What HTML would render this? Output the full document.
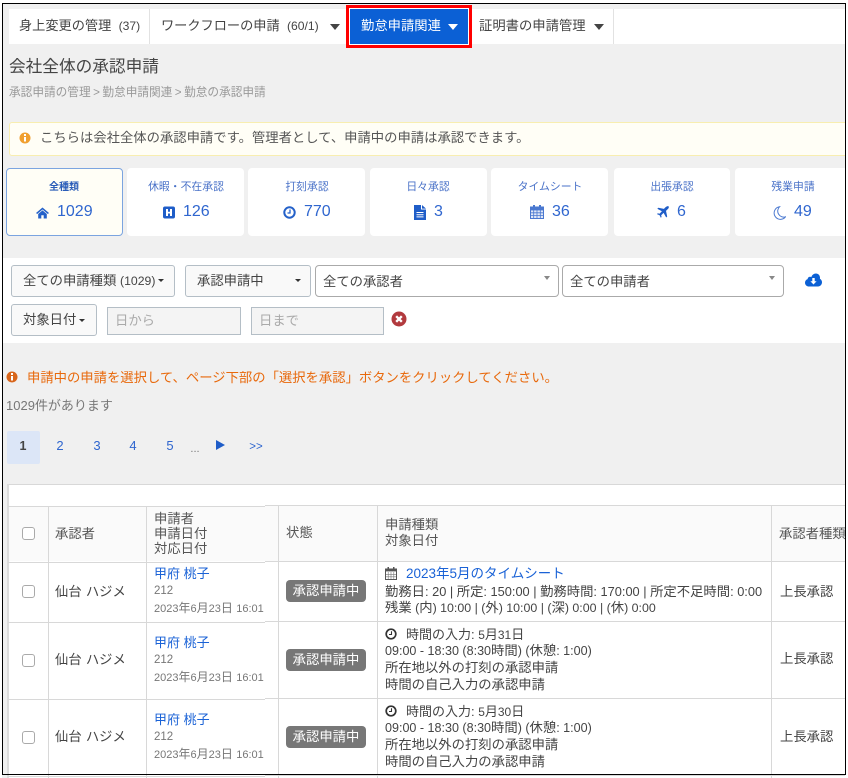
<!DOCTYPE html>
<html lang="ja"><head><meta charset="utf-8"><title>会社全体の承認申請</title>
<style>
html,body{margin:0;padding:0;background:#fff}
#p{position:relative;width:848px;height:778px;overflow:hidden;background:#fff;font-family:"Liberation Sans","Noto Sans CJK JP",sans-serif;color:#444;font-size:13.33px;text-spacing-trim:space-all}
#c{position:absolute;left:0;top:0;width:845px;height:778px;overflow:hidden}
.a{position:absolute}
.t{position:absolute;white-space:nowrap;line-height:16px}
.ct{transform:translateX(-50%)}
i.n{font-style:normal;font-size:.92em}
i.l{font-style:normal;font-size:var(--l)}
.card{position:absolute;top:168px;height:68px;background:#fff;border-radius:4px}
.lb{color:#4a72c8;font-size:10.83px}
.num{color:#2f66cf;font-size:16px}
.btn{position:absolute;background:#f9f9f9;border:1px solid #b4bec6;border-radius:3px;box-sizing:border-box}
.sel{position:absolute;background:#fff;border:1px solid #aaa;border-radius:4px;box-sizing:border-box;top:265px;height:32px}
.inp{position:absolute;background:#f4f4f4;border:1px solid #b4bec6;box-sizing:border-box;top:307px;height:28px}
.h{position:absolute;background:#d8d8d8}
.cb{position:absolute;left:22px;width:11px;height:11px;border:1.5px solid #aaa;border-radius:3px;background:#fff}
.bd{position:absolute;left:286px;width:80px;height:22px;background:#777;border-radius:4px;color:#fff;font-size:13.33px;line-height:22px;text-align:center}
.lk{color:#1a62d6}
.g{color:#777}
.pg{color:#2f66cf;font-size:13px}
.nm{word-spacing:.5px}
.d{font-size:12px}
.d i{font-style:normal;font-size:11px}
</style></head><body>
<div id="p"><div id="c">
<div class="a" style="left:0;top:0;width:848px;height:778px;background:#f0f0f0"></div>

<!-- nav -->
<div class="a" style="left:9px;top:9px;width:836px;height:35px;background:#fff"></div>
<div class="h" style="left:149px;top:9px;width:1px;height:35px;background:#e2e2e2"></div>
<div class="h" style="left:613px;top:9px;width:1px;height:35px;background:#e2e2e2"></div>
<span class="t" style="left:19px;top:18px;color:#444;font-size:13.2px">身上変更の管理&nbsp; <i class="n">(37)</i></span>
<span class="t" style="left:161px;top:18px;color:#444;font-size:13.2px">ワークフローの申請&nbsp; <i class="n">(60/1)</i></span>
<div class="a" style="left:330px;top:24px;border:5px solid transparent;border-top:6px solid #444;border-bottom:0"></div>
<div class="a" style="left:346px;top:5px;width:126px;height:43px;background:#fff;box-sizing:border-box;border:3px solid #f00"></div>
<div class="a" style="left:350px;top:9px;width:118px;height:35px;background:#0b60d5"></div>
<span class="t" style="left:361px;top:18px;color:#fff">勤怠申請関連</span>
<div class="a" style="left:448px;top:24px;border:5px solid transparent;border-top:6px solid #fff;border-bottom:0"></div>
<span class="t" style="left:479px;top:18px;color:#444">証明書の申請管理</span>
<div class="a" style="left:594px;top:24px;border:5px solid transparent;border-top:6px solid #444;border-bottom:0"></div>

<!-- title -->
<span class="t" style="left:9px;top:59px;font-size:16.67px;color:#444">会社全体の承認申請</span>
<span class="t" style="left:9px;top:85px;font-size:11.67px;color:#999;word-spacing:-.75px">承認申請の管理 &gt; 勤怠申請関連 &gt; 勤怠の承認申請</span>

<!-- alert -->
<div class="a" style="left:9px;top:122px;width:840px;height:34px;box-sizing:border-box;background:#fffef6;border:1px solid #f8eeb0;border-radius:3px"></div>
<svg class="a" style="left:19px;top:132px" width="12" height="12" viewBox="0 0 12 12"><circle cx="6" cy="6" r="5.5" fill="#f0a030"/><rect x="5" y="2" width="2" height="2" fill="#fff"/><rect x="5" y="5" width="2" height="4.5" fill="#fff"/></svg>
<span class="t" style="left:40px;top:130px;color:#555">こちらは会社全体の承認申請です。管理者として、申請中の申請は承認できます。</span>

<!-- cards -->
<div class="card" style="left:6px;width:117px;box-sizing:border-box;background:#fffef6;border:1px solid #7ba4e0"></div>
<div class="card" style="left:127px;width:117px"></div>
<div class="card" style="left:248px;width:117px"></div>
<div class="card" style="left:370px;width:117px"></div>
<div class="card" style="left:491px;width:117px"></div>
<div class="card" style="left:614px;width:116px"></div>
<div class="card" style="left:735px;width:120px"></div>

<span class="t ct lb" style="left:64px;top:180px;color:#2a5cb8;font-weight:bold;font-size:10px">全種類</span>
<span class="t ct lb" style="left:186px;top:179px">休暇・不在承認</span>
<span class="t ct lb" style="left:307px;top:179px">打刻承認</span>
<span class="t ct lb" style="left:428px;top:179px">日々承認</span>
<span class="t ct lb" style="left:550px;top:179px">タイムシート</span>
<span class="t ct lb" style="left:672px;top:179px">出張承認</span>
<span class="t ct lb" style="left:793px;top:179px">残業申請</span>

<svg class="a" style="left:36px;top:207px" width="13" height="12" viewBox="0 0 13 12"><path d="M6.500 .5 L13 6 L11.800 7 L6.500 2.500 L1.200 7 L0 6 Z M2.200 7 L6.500 3.400 L10.800 7 V11.500 H7.700 V8.200 H5.300 V11.500 H2.200 Z" fill="#2461c9"/></svg>
<span class="t num" style="left:57px;top:204px">1029</span>
<svg class="a" style="left:163px;top:206px" width="12" height="13" viewBox="0 0 12 12"><rect width="12" height="12" rx="2" fill="#1f5dc8"/><path d="M3 2.500h2v2.700h2V2.500h2v7H7V7H5v2.500H3z" fill="#fff"/></svg>
<span class="t num" style="left:183px;top:204px">126</span>
<svg class="a" style="left:283px;top:206px" width="13" height="13" viewBox="0 0 13 13"><circle cx="6.500" cy="6.500" r="5.200" fill="none" stroke="#2461c9" stroke-width="2"/><path d="M7 3.500V7H4.500" fill="none" stroke="#2461c9" stroke-width="1.300"/></svg>
<span class="t num" style="left:304px;top:204px">770</span>
<svg class="a" style="left:414px;top:205px" width="12" height="15" viewBox="0 0 12 15"><path d="M0 0H7V4.500H12V15H0Z M8 0L12 3.600H8Z" fill="#1f5dc8"/><path d="M2.500 7.500H9.500M2.500 9.700H9.500M2.500 11.900H9.500" stroke="#fff" stroke-width="1"/></svg>
<span class="t num" style="left:434px;top:204px">3</span>
<svg class="a" style="left:530px;top:205px" width="14" height="14" viewBox="0 0 14 14"><rect x=".5" y="2" width="13" height="11.500" fill="#dfe7f7" stroke="#4a78d0"/><rect x="0" y="2" width="14" height="3.400" fill="#4a78d0"/><rect x="3" y="0" width="2" height="3.500" fill="#4a78d0"/><rect x="9" y="0" width="2" height="3.500" fill="#4a78d0"/><path d="M3.700 5v8M7 5v8M10.300 5v8M1 7.800h12M1 10.600h12" stroke="#4a78d0" stroke-width=".8"/></svg>
<span class="t num" style="left:552px;top:204px">36</span>
<svg class="a" style="left:657px;top:206px" width="12" height="12" viewBox="0 0 12 12"><path d="M11.600 .4c.7.700-.1 2-1 2.900L9 4.900l1.200 5.600-1 1-2.600-4.600L4.200 9.300l.4 1.700-.8.8-1.200-2.500L0 8.100l.8-.8 1.700.4 2.400-2.400L.3 2.700l1-1 5.600 1.200L8.500 1.300c.9-.9 2.400-1.600 3.100-.9z" fill="#1f5dc8"/></svg>
<span class="t num" style="left:677px;top:204px">6</span>
<svg class="a" style="left:773px;top:206px" width="13" height="14" viewBox="0 0 13 14"><path d="M6.500 .8A6.300 6.300 0 1 0 12.500 10.800A6 6 0 0 1 6.500 .8Z" fill="none" stroke="#4a78d0" stroke-width="1"/></svg>
<span class="t num" style="left:794px;top:204px">49</span>

<!-- filter panel -->
<div class="a" style="left:3px;top:258px;width:845px;height:85px;background:#fff"></div>
<div class="btn" style="left:11px;top:265px;width:164px;height:32px"></div>
<span class="t" style="left:23px;top:273px;color:#444">全ての申請種類 <i class="n">(1029)</i></span>
<div class="a" style="left:158px;top:279px;border:3px solid transparent;border-top:3px solid #333;border-bottom:0"></div>
<div class="btn" style="left:185px;top:265px;width:126px;height:32px"></div>
<span class="t" style="left:197px;top:273px;color:#444">承認申請中</span>
<div class="a" style="left:295px;top:279px;border:3px solid transparent;border-top:3px solid #333;border-bottom:0"></div>
<div class="sel" style="left:315px;width:244px"></div>
<span class="t" style="left:323px;top:274px;color:#444">全ての承認者</span>
<div class="a" style="left:544px;top:276px;border:3px solid transparent;border-top:4px solid #888;border-bottom:0"></div>
<div class="sel" style="left:562px;width:222px"></div>
<span class="t" style="left:570px;top:274px;color:#444">全ての申請者</span>
<div class="a" style="left:769px;top:276px;border:3px solid transparent;border-top:4px solid #888;border-bottom:0"></div>
<svg class="a" style="left:805px;top:273px" width="17" height="14" viewBox="0 0 17 14"><path d="M4 13.500C1.800 13.500 0 11.800 0 9.700C0 8 1 6.600 2.600 6.100C2.700 4.800 3.800 3.800 5.100 3.800C5.600 3.800 6 3.900 6.300 4.100C7 2 8.800 .5 10.900 .5C13.400 .5 15 2.400 15 4.800C15 5.200 15 5.500 14.900 5.800C16.200 6.500 17 7.800 17 9.300C17 11.600 15.200 13.500 13 13.500Z" fill="#0b60d5"/><path d="M7.300 5H9.700V8.200H11.600L8.500 11.500L5.400 8.200H7.300Z" fill="#fff"/></svg>

<div class="btn" style="left:11px;top:304px;width:86px;height:32px"></div>
<span class="t" style="left:23px;top:312px;color:#444">対象日付</span>
<div class="a" style="left:79px;top:319px;border:3px solid transparent;border-top:3px solid #333;border-bottom:0"></div>
<div class="inp" style="left:107px;width:134px"></div>
<span class="t" style="left:115px;top:313px;color:#aaa">日から</span>
<div class="inp" style="left:251px;width:133px"></div>
<span class="t" style="left:259px;top:313px;color:#aaa">日まで</span>
<svg class="a" style="left:391px;top:311px" width="16" height="16" viewBox="0 0 16 16"><circle cx="8" cy="8" r="7.500" fill="#b23a3e"/><path d="M5.200 5.200L10.800 10.800M10.800 5.200L5.200 10.800" stroke="#fff" stroke-width="2.400"/></svg>

<!-- messages -->
<svg class="a" style="left:6px;top:371px" width="12" height="12" viewBox="0 0 12 12"><circle cx="6" cy="6" r="5.500" fill="#d8651a"/><rect x="5" y="2" width="2" height="2" fill="#fff"/><rect x="5" y="5" width="2" height="4.500" fill="#fff"/></svg>
<span class="t" style="left:27px;top:370px;color:#e8690c">申請中の申請を選択して、ページ下部の「選択を承認」ボタンをクリックしてください。</span>
<span class="t" style="left:6px;top:398px;font-size:13px;color:#777">1029件があります</span>

<!-- pagination -->
<div class="a" style="left:7px;top:431px;width:33px;height:33px;background:#dce6f7;border-radius:2px"></div>
<span class="t ct" style="left:23px;top:438px;font-weight:bold;color:#444;font-size:12.500px">1</span>
<span class="t ct pg" style="left:60px;top:438px">2</span>
<span class="t ct pg" style="left:97px;top:438px">3</span>
<span class="t ct pg" style="left:133px;top:438px">4</span>
<span class="t ct pg" style="left:170px;top:438px">5</span>
<span class="t ct" style="left:195px;top:441px;font-size:11px;color:#777">...</span>
<div class="a" style="left:216px;top:440px;border:5px solid transparent;border-left:9px solid #1f5dc8;border-right:0"></div>
<span class="t ct" style="left:256px;top:439px;font-size:11.5px;color:#2f66cf">&gt;&gt;</span>

<!-- table -->
<div class="a" style="left:7px;top:484px;width:845px;height:300px;background:#fff"></div>
<div class="a" style="left:8px;top:506px;width:840px;height:55px;background:#fafafa"></div>
<div class="a" style="left:265px;top:505px;width:583px;height:1px;background:#fff"></div>
<div class="h" style="left:7px;top:484px;width:845px;height:1px"></div>
<div class="h" style="left:7px;top:484px;width:2px;height:300px;background:#dcdcdc"></div>
<div class="h" style="left:8px;top:506px;width:257px;height:1px"></div><div class="h" style="left:265px;top:505px;width:583px;height:1px"></div>
<div class="h" style="left:8px;top:562px;width:257px;height:1px"></div><div class="h" style="left:265px;top:561px;width:583px;height:1px"></div>
<div class="h" style="left:8px;top:622px;width:257px;height:1px"></div><div class="h" style="left:265px;top:621px;width:583px;height:1px"></div>
<div class="h" style="left:8px;top:699px;width:257px;height:1px"></div><div class="h" style="left:265px;top:698px;width:583px;height:1px"></div>
<div class="h" style="left:8px;top:776px;width:257px;height:1px"></div><div class="h" style="left:265px;top:775px;width:583px;height:1px"></div>
<div class="h" style="left:48px;top:506px;width:1px;height:272px"></div>
<div class="h" style="left:146px;top:506px;width:1px;height:272px"></div>
<div class="h" style="left:278px;top:505px;width:1px;height:273px"></div>
<div class="h" style="left:377px;top:505px;width:1px;height:273px"></div>
<div class="h" style="left:771px;top:505px;width:1px;height:273px"></div>

<!-- header -->
<div class="cb" style="top:527px"></div>
<span class="t" style="left:55px;top:526px;color:#555">承認者</span>
<span class="t" style="left:154px;top:511px;color:#555">申請者</span>
<span class="t" style="left:154px;top:526px;color:#555">申請日付</span>
<span class="t" style="left:154px;top:541px;color:#555">対応日付</span>
<span class="t" style="left:286px;top:525px;color:#555">状態</span>
<span class="t" style="left:385px;top:517px;color:#555">申請種類</span>
<span class="t" style="left:385px;top:533px;color:#555">対象日付</span>
<span class="t" style="left:779px;top:526px;color:#555">承認者種類</span>

<!-- row 1 -->
<div class="cb" style="top:585px"></div>
<span class="t nm" style="left:55px;top:584px">仙台 ハジメ</span>
<span class="t lk" style="left:154px;top:566px;font-size:13px">甲府 桃子</span>
<span class="t g" style="left:154px;top:583px;font-size:11.500px">212</span>
<span class="t g d" style="left:154px;top:600px"><i>2023</i>年<i>6</i>月<i>23</i>日 <i>16:01</i></span>
<div class="bd" style="top:580px">承認申請中</div>
<svg class="a" style="left:385px;top:567px" width="12" height="13" viewBox="0 0 12 13"><rect x=".5" y="2" width="11" height="10.500" fill="#fff" stroke="#555"/><rect x="0" y="2" width="12" height="2.400" fill="#555"/><rect x="2.500" y="0" width="1.500" height="3" fill="#555"/><rect x="8" y="0" width="1.500" height="3" fill="#555"/><path d="M3.200 5v7M6 5v7M8.800 5v7M1 7.300h10M1 9.800h10" stroke="#777" stroke-width=".6"/></svg>
<span class="t lk" style="left:406px;top:566px;font-size:13.5px">2023年5月のタイムシート</span>
<span class="t" style="left:385px;top:584px;--l:12.8px">勤務日<i class="l">: 20 | </i>所定<i class="l">: 150:00 | </i>勤務時間<i class="l">: 170:00 | </i>所定不足時間<i class="l">: 0:00</i></span>
<span class="t" style="left:385px;top:600px;--l:12.4px">残業<i class="l"> (</i>内<i class="l">) 10:00 | (</i>外<i class="l">) 10:00 | (</i>深<i class="l">) 0:00 | (</i>休<i class="l">) 0:00</i></span>
<span class="t" style="left:780px;top:584px">上長承認</span>

<!-- row 2 -->
<div class="cb" style="top:654px"></div>
<span class="t nm" style="left:55px;top:652px">仙台 ハジメ</span>
<span class="t lk" style="left:154px;top:635px;font-size:13px">甲府 桃子</span>
<span class="t g" style="left:154px;top:652px;font-size:11.500px">212</span>
<span class="t g d" style="left:154px;top:669px"><i>2023</i>年<i>6</i>月<i>23</i>日 <i>16:01</i></span>
<div class="bd" style="top:649px">承認申請中</div>
<svg class="a" style="left:385px;top:628px" width="12" height="12" viewBox="0 0 12 12"><circle cx="6" cy="6" r="4.800" fill="none" stroke="#333" stroke-width="1.700"/><path d="M6.500 3.200V6.500H4" fill="none" stroke="#333" stroke-width="1.100"/></svg>
<span class="t" style="left:406px;top:627px;font-size:13px">時間の入力: <i class="n">5</i>月<i class="n">31</i>日</span>
<span class="t" style="left:385px;top:643px;--l:12.55px"><i class="l">09:00 - 18:30 (8:30</i>時間<i class="l">) (</i>休憩<i class="l">: 1:00)</i></span>
<span class="t" style="left:385px;top:660px">所在地以外の打刻の承認申請</span>
<span class="t" style="left:385px;top:677px">時間の自己入力の承認申請</span>
<span class="t" style="left:780px;top:651px">上長承認</span>

<!-- row 3 -->
<div class="cb" style="top:731px"></div>
<span class="t nm" style="left:55px;top:729px">仙台 ハジメ</span>
<span class="t lk" style="left:154px;top:712px;font-size:13px">甲府 桃子</span>
<span class="t g" style="left:154px;top:729px;font-size:11.500px">212</span>
<span class="t g d" style="left:154px;top:746px"><i>2023</i>年<i>6</i>月<i>23</i>日 <i>16:01</i></span>
<div class="bd" style="top:726px">承認申請中</div>
<svg class="a" style="left:385px;top:705px" width="12" height="12" viewBox="0 0 12 12"><circle cx="6" cy="6" r="4.800" fill="none" stroke="#333" stroke-width="1.700"/><path d="M6.500 3.200V6.500H4" fill="none" stroke="#333" stroke-width="1.100"/></svg>
<span class="t" style="left:406px;top:704px;font-size:13px">時間の入力: <i class="n">5</i>月<i class="n">30</i>日</span>
<span class="t" style="left:385px;top:720px;--l:12.55px"><i class="l">09:00 - 18:30 (8:30</i>時間<i class="l">) (</i>休憩<i class="l">: 1:00)</i></span>
<span class="t" style="left:385px;top:737px">所在地以外の打刻の承認申請</span>
<span class="t" style="left:385px;top:754px">時間の自己入力の承認申請</span>
<span class="t" style="left:780px;top:729px">上長承認</span>
</div>

<!-- screenshot frame -->
<div class="a" style="left:0;top:0;width:848px;height:3px;background:#fff"></div>
<div class="a" style="left:0;top:0;width:2px;height:778px;background:#fff"></div>
<div class="a" style="left:846px;top:0;width:2px;height:778px;background:#fff"></div>
<div class="a" style="left:2px;top:3px;width:844px;height:1px;background:#000"></div>
<div class="a" style="left:2px;top:3px;width:1px;height:772px;background:#000"></div>
<div class="a" style="left:845px;top:3px;width:1px;height:772px;background:#000"></div>
<div class="a" style="left:2px;top:774px;width:844px;height:1px;background:#000"></div>
</div>
</body></html>
